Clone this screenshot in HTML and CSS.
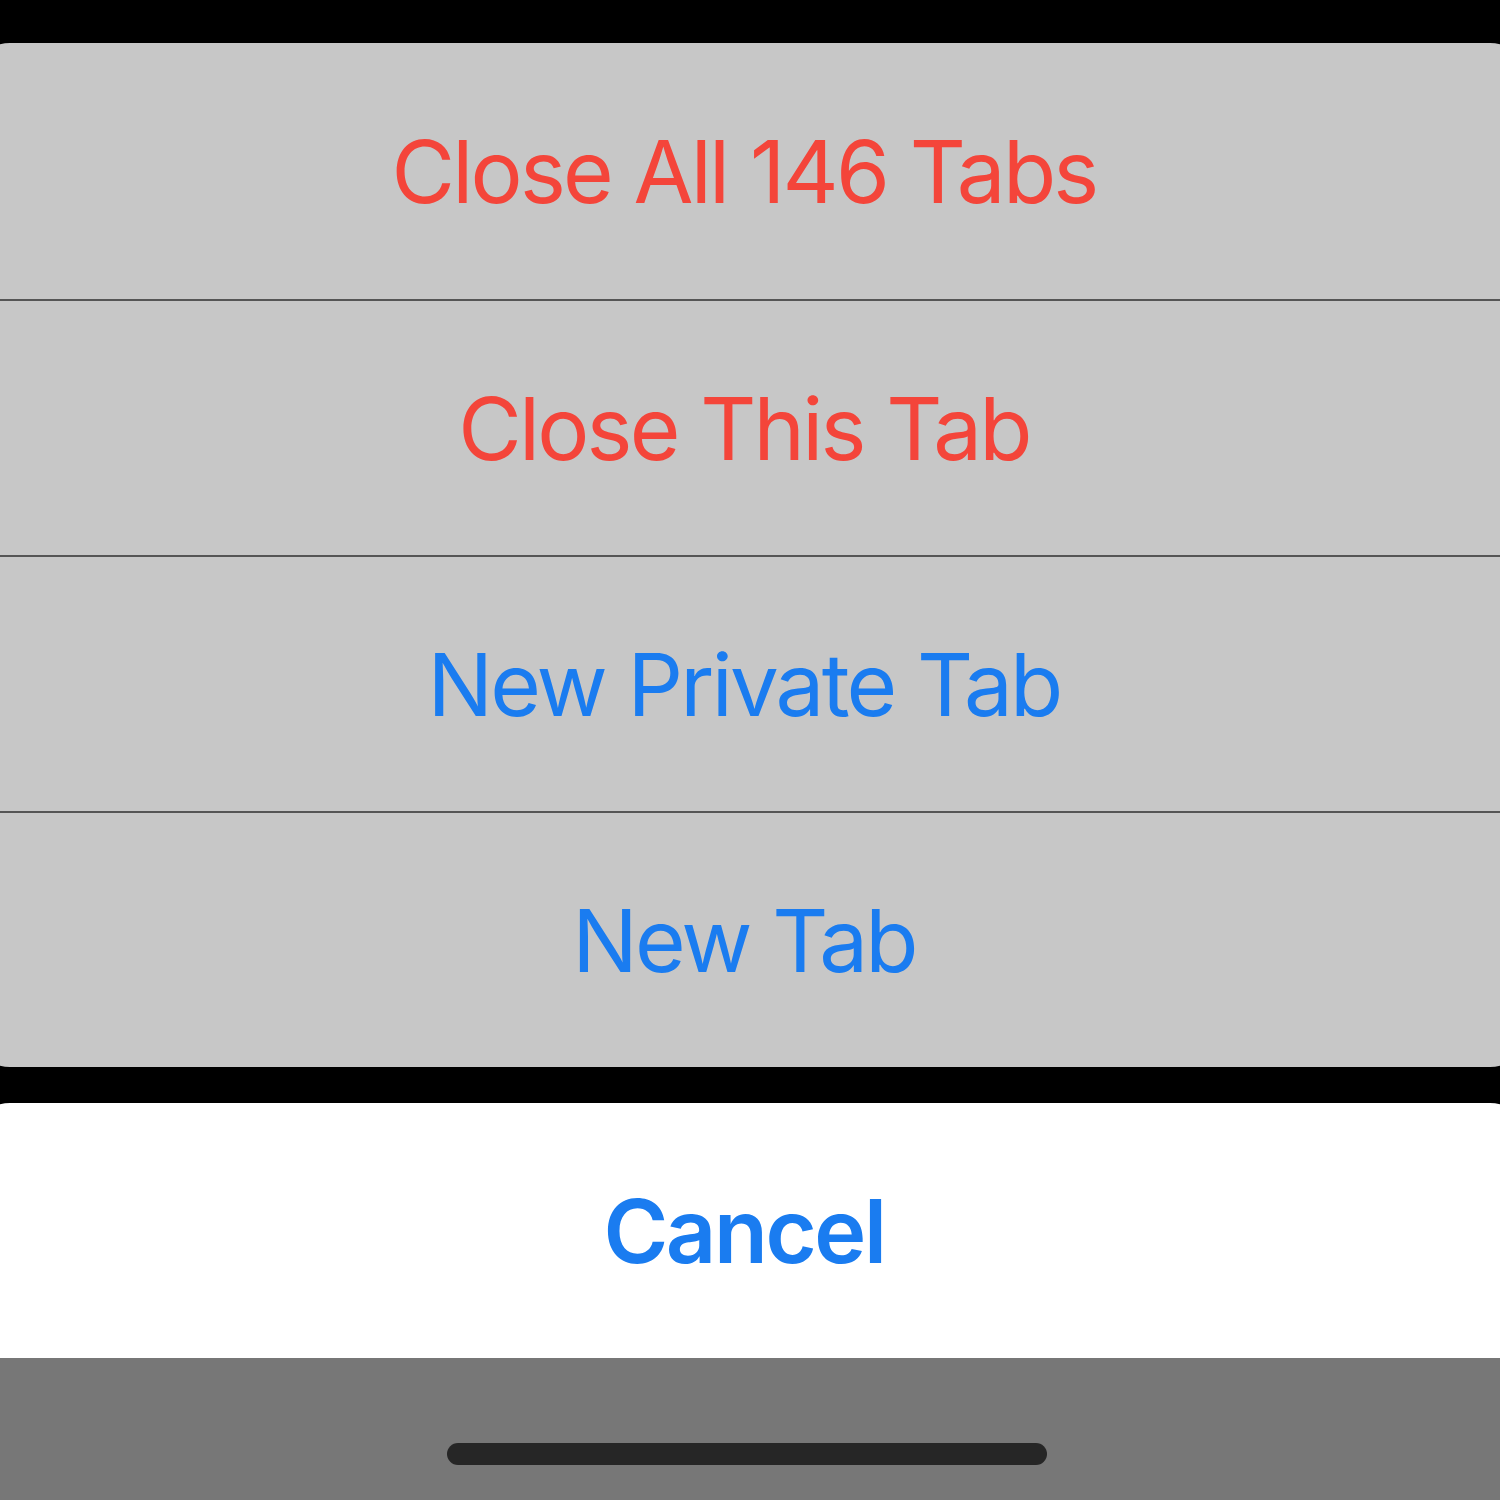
FILE: index.html
```html
<!DOCTYPE html>
<html lang="en">
<head>
<meta charset="UTF-8" />
<title>Tab Actions</title>
<link rel="stylesheet" href="styles.css">
</head>
<body>
  <div id="screen">
    <div id="action-group">
      <div class="action destructive">Close All 146 Tabs</div>
      <div class="action destructive">Close This Tab</div>
      <div class="action">New Private Tab</div>
      <div class="action">New Tab</div>
    </div>
    <div id="cancel-group">
      <div class="action cancel">Cancel</div>
    </div>
    <div id="home-area">
      <div id="home-indicator"></div>
    </div>
  </div>
</body>
</html>
```

FILE: styles.css
```css
html, body {
  margin: 0;
  padding: 0;
  background-color: #000;
}
body {
  font-family: Inter, 'Liberation Sans', sans-serif;
  overflow: hidden;
}
#screen {
  width: 1500px;
  height: 1500px;
  padding-top: 43px;
  box-sizing: border-box;
  display: flex;
  flex-direction: column;
}
#action-group {
  margin: 0 -30px;
  background-color: #c7c7c7;
  border-radius: 40px;
  overflow: hidden;
}
.action {
  height: 256px;
  box-sizing: border-box;
  padding-right: 12px;
  display: flex;
  align-items: center;
  justify-content: center;
  font-size: 87px;
  font-weight: 400;
  color: #1a7cf0;
  letter-spacing: -2.8px;
  word-spacing: 1px;
}
.action + .action {
  border-top: 2px solid #555;
}
.action.destructive {
  color: #f4453a;
}
#cancel-group {
  margin: 36px -30px 0 -30px;
  background-color: #fff;
  border-radius: 40px 40px 0 0;
}
.action.cancel {
  height: 255px;
  font-size: 88px;
  font-weight: 600;
  letter-spacing: -2.4px;
  color: #1a7cf0;
}
#home-area {
  flex: 1;
  background-color: #777;
  display: flex;
  justify-content: center;
  padding-top: 85px;
}
#home-indicator {
  width: 600px;
  height: 22px;
  margin-left: -7px;
  border-radius: 11px;
  background-color: #262626;
}
```
